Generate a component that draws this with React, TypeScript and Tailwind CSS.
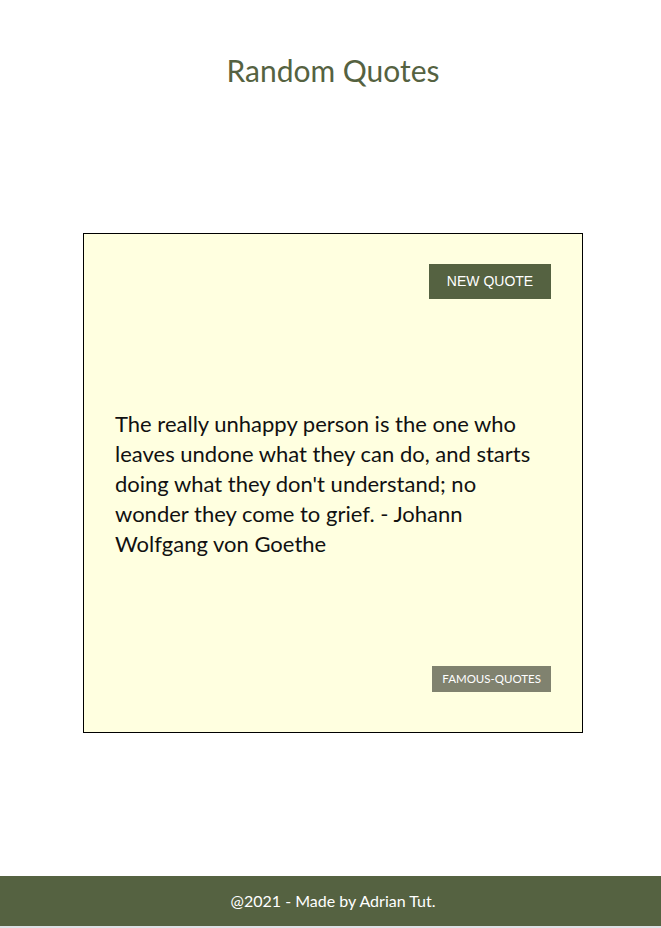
import React from "react";

export default function App() {
  return (
    <div className="min-h-[928px] flex flex-col bg-white font-['Lato','Open_Sans',sans-serif]">
      <main className="flex flex-col pl-[5px]">
        {/* Heading */}
        <h1 className="mt-[50px] text-center text-[30px] leading-[40px] text-[#556241]">
          Random Quotes
        </h1>

        {/* Quote card */}
        <div className="mt-[143px] mx-auto w-[500px] h-[500px] border border-black bg-[#ffffe0] flex flex-col px-[31px] pt-[30px] pb-[40px]">
          <div className="flex justify-end">
            <button className="w-[122px] h-[35px] bg-[#556241] text-white text-[14px] font-['Liberation_Sans',Arial,sans-serif]">
              NEW QUOTE
            </button>
          </div>
          <div className="flex-1 flex items-center">
            <p className="text-[22px] leading-[30px] text-[#111] pt-[2px]">
              The really unhappy person is the one who leaves undone what they can do, and starts doing what they don't understand; no wonder they come to grief. - Johann Wolfgang von Goethe
            </p>
          </div>
          <div className="flex justify-end">
            <span className="h-[26px] px-[10px] flex items-center bg-[#80826f] text-white text-[11.5px]">
              FAMOUS-QUOTES
            </span>
          </div>
        </div>
      </main>

      <div className="flex-1" />

      {/* Footer */}
      <footer className="h-[50px] pl-[5px] bg-[#556241] flex items-center justify-center text-white text-[16px]">
        @2021 - Made by Adrian Tut.
      </footer>
      <div className="h-[2px] bg-[#dde0e6]" />
    </div>
  );
}
